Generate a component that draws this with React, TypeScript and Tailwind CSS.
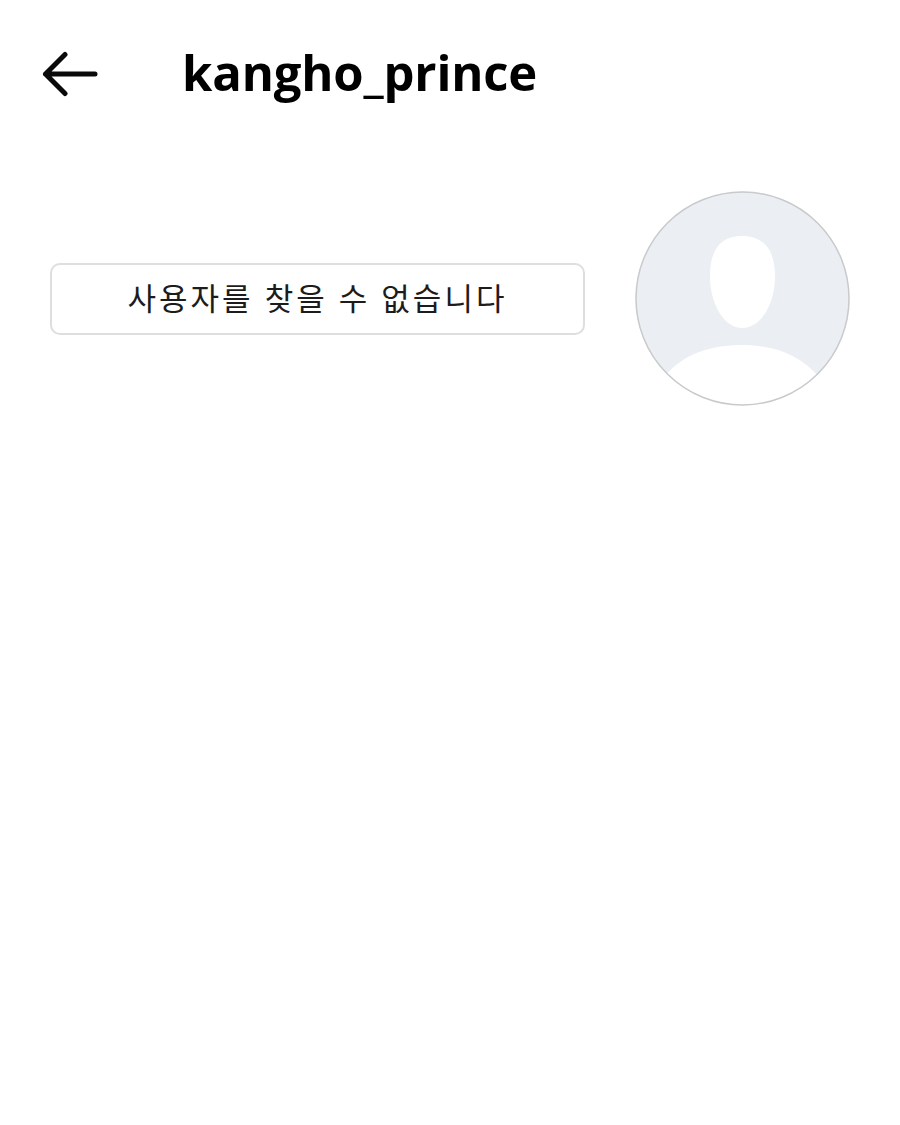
export default function App() {
  return (
    <div className="min-h-[1125px] bg-white font-['Open_Sans','Noto_Sans_CJK_KR',sans-serif]">
      <header className="flex items-center h-[146px] pl-[41px] pb-[2px]">
        <svg className="mt-[3px]" width="58" height="46" viewBox="0 0 58 46" fill="none" stroke="#0a0a0a" strokeWidth="5" strokeLinecap="round" strokeLinejoin="round">
          <path d="M54 23H4.500M24 3.500L4.500 23L24 42.500" />
        </svg>
        <h1 className="ml-[83px] text-[49px] leading-none font-bold text-black tracking-[-0.15px]">kangho_prince</h1>
      </header>

      <div className="flex items-center pl-[50px] pt-[45px]">
        <div className="w-[535px] h-[72px] flex items-center justify-center bg-white border-[2.5px] border-[#dedede] rounded-[10px]">
          <span className="text-[31px] leading-none font-normal text-[#1c1c1c] tracking-[3px]">사용자를 찾을 수 없습니다</span>
        </div>
        <svg className="ml-[50px]" width="215" height="215" viewBox="0 0 215 215">
          <defs>
            <clipPath id="avatar-clip">
              <circle cx="107.5" cy="107.5" r="107" />
            </clipPath>
          </defs>
          <circle cx="107.5" cy="107.5" r="107" fill="#ebeff3" />
          <g clipPath="url(#avatar-clip)" fill="#ffffff">
            <path d="M107 45C128 45 140 58 140 85C140 113 126 137 107 137C89 137 75 113 75 85C75 58 86 45 107 45Z" />
            <path d="M30 185C48 163 76 154 107 154C138 154 164 163 183 185L183 215L30 215Z" />
          </g>
          <circle cx="107.5" cy="107.5" r="106.5" fill="none" stroke="#c8cacc" strokeWidth="1.5" />
        </svg>
      </div>
    </div>
  );
}
